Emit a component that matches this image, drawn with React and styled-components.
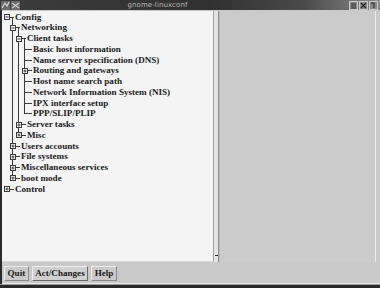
import React from 'react';
import styled, { createGlobalStyle } from 'styled-components';

const GlobalStyle = createGlobalStyle`
  html, body { margin: 0; padding: 0; background: #c9c9c9; }
  body { width: 380px; height: 288px; overflow: hidden; }
`;

const LINE = '#3a3a3a';

const Frame = styled.div`
  width: 380px;
  height: 288px;
  display: flex;
  flex-direction: column;
  background: #c9c9c9;
  box-sizing: border-box;
  border-left: 2px solid #2a2a2a;
  font-family: "Liberation Serif", "DejaVu Serif", serif;
`;

const TitleBar = styled.div`
  height: 10px;
  flex: none;
  display: flex;
  align-items: center;
  background: linear-gradient(to right, #3c3c3c 0%, #303030 55%, #4a4a4a 80%, #8a8a8a 100%);
  margin-left: -2px;
`;

const TitleIcons = styled.div`
  display: flex;
  gap: 1px;
  padding-left: 1px;
`;

const TitleText = styled.div`
  flex: 1;
  text-align: center;
  font-family: "DejaVu Sans", sans-serif;
  font-size: 7px;
  line-height: 10px;
  color: #b4b4b4;
  padding-right: 54px;
  letter-spacing: 0.1px;
`;

const TitleButtons = styled.div`
  display: flex;
  gap: 1px;
  padding-right: 2px;
`;

const Main = styled.div`
  flex: 1;
  display: flex;
  padding: 1px 4px 0 0;
  min-height: 0;
`;

const TreePane = styled.div`
  width: 212px;
  flex: none;
  background: #f4f4f4;
  border-right: 1px solid #a0a0a0;
  border-bottom: 1px solid #d8d8d8;
  padding-top: 0.5px;
  box-sizing: border-box;
  overflow: hidden;
`;

const Gutter = styled.div`
  width: 4px;
  flex: none;
  display: flex;
  flex-direction: column;
  justify-content: flex-end;
  align-items: center;
  padding-bottom: 6px;
  background: #e4e4e4;
`;

const GutterMark = styled.div`
  width: 3px;
  height: 1px;
  background: #222;
`;

const RightPane = styled.div`
  flex: 1;
  background: #cbcbcb;
  border-left: 1px solid #8e8e8e;
  box-shadow: inset 1px 0 0 #bdbdbd;
  border-right: 1px solid #ececec;
`;

const Row = styled.div`
  height: 10.75px;
  display: flex;
  align-items: stretch;
  padding-left: 1px;
`;

const Cell = styled.span`
  position: relative;
  width: 6px;
  flex: none;
  &::before {
    content: '';
    display: ${p => (p.$up || p.$down ? 'block' : 'none')};
    position: absolute;
    left: 3px;
    width: 1px;
    top: ${p => (p.$up ? '0' : '5px')};
    bottom: ${p => (p.$down ? '0' : 'calc(100% - 6px)')};
    background: ${LINE};
  }
  &::after {
    content: '';
    display: ${p => (p.$right ? 'block' : 'none')};
    position: absolute;
    left: 3px;
    right: 0;
    top: 5px;
    height: 1px;
    background: ${LINE};
  }
`;

const BoxIcon = styled.svg`
  position: absolute;
  left: 0.5px;
  top: 2.5px;
  z-index: 1;
`;

const Stem = styled.span`
  position: relative;
  width: 6px;
  flex: none;
  &::after {
    content: '';
    position: absolute;
    left: 0;
    width: 5px;
    top: 5px;
    height: 1px;
    background: ${LINE};
  }
  &::before {
    content: '';
    display: ${p => (p.$open ? 'block' : 'none')};
    position: absolute;
    left: 3px;
    width: 1px;
    top: 5px;
    bottom: 0;
    background: ${LINE};
  }
`;

const Label = styled.span`
  font-size: 9.1px;
  font-weight: bold;
  line-height: 10.75px;
  color: #1a1a1a;
  white-space: nowrap;
`;

const ButtonBar = styled.div`
  height: 22px;
  flex: none;
  display: flex;
  align-items: center;
  gap: 3px;
  padding: 1px 2px 0;
  border-bottom: 1px solid #e8e8e8;
  box-sizing: border-box;
`;

const Button = styled.button`
  height: 15px;
  padding: 0 ${p => p.$pad}px;
  margin: 0;
  font-family: "Liberation Serif", "DejaVu Serif", serif;
  font-size: 9.1px;
  font-weight: bold;
  color: #1a1a1a;
  background: ${p => (p.$active ? '#d0d0d0' : '#cacaca')};
  border: 1px solid;
  border-color: ${p => (p.$active ? '#f0f0f0 #6a6a6a #6a6a6a #f0f0f0' : '#ececec #8a8a8a #8a8a8a #ececec')};
  line-height: 13px;
  cursor: pointer;
`;

const BottomEdge = styled.div`
  height: 4px;
  flex: none;
  margin-left: -2px;
  background: linear-gradient(to bottom, #9a9a9a 0, #9a9a9a 1px, #2a2a2a 1px);
`;

const tree = [
  {
    label: 'Config',
    open: true,
    children: [
      {
        label: 'Networking',
        open: true,
        children: [
          {
            label: 'Client tasks',
            open: true,
            children: [
              { label: 'Basic host information' },
              { label: 'Name server specification (DNS)' },
              { label: 'Routing and gateways', children: [{ label: 'x' }] },
              { label: 'Host name search path' },
              { label: 'Network Information System (NIS)' },
              { label: 'IPX interface setup' },
              { label: 'PPP/SLIP/PLIP' },
            ],
          },
          { label: 'Server tasks', children: [{ label: 'x' }] },
          { label: 'Misc', children: [{ label: 'x' }] },
        ],
      },
      { label: 'Users accounts', children: [{ label: 'x' }] },
      { label: 'File systems', children: [{ label: 'x' }] },
      { label: 'Miscellaneous services', children: [{ label: 'x' }] },
      { label: 'boot mode', children: [{ label: 'x' }] },
    ],
  },
  { label: 'Control', children: [{ label: 'x' }] },
];

function flatten(nodes, depth = 0, guides = [], out = []) {
  nodes.forEach((n, i) => {
    const last = i === nodes.length - 1;
    out.push({ ...n, depth, guides, last });
    if (n.open && n.children) {
      flatten(n.children, depth + 1, [...guides, depth > 0 && !last], out);
    }
  });
  return out;
}

function Box({ open }) {
  return (
    <BoxIcon width="6" height="6" viewBox="0 0 6 6">
      <rect x="0.5" y="0.5" width="5" height="5" fill="#f4f4f4" stroke={LINE} strokeWidth="1" />
      <line x1="1.5" y1="3" x2="4.5" y2="3" stroke={LINE} strokeWidth="1" />
      {!open && <line x1="3" y1="1.5" x2="3" y2="4.5" stroke={LINE} strokeWidth="1" />}
    </BoxIcon>
  );
}

function TreeRow({ node }) {
  const hasKids = !!node.children;
  return (
    <Row>
      {node.guides.map((g, k) => (
        <Cell key={k} $up={g} $down={g} />
      ))}
      <Cell $up={node.depth > 0} $down={node.depth > 0 && !node.last} $right={!hasKids}>
        {hasKids && <Box open={node.open} />}
      </Cell>
      <Stem $open={node.open} />
      <Label>{node.label}</Label>
    </Row>
  );
}

function TitleIcon({ kind }) {
  return (
    <svg width="9" height="9" viewBox="0 0 9 9">
      <rect x="0" y="0" width="9" height="9" fill="#6a6a6a" />
      {kind === 'a' ? (
        <path d="M1 7 L4 2 L6 5 L8 1" stroke="#d8d8d8" strokeWidth="1.2" fill="none" />
      ) : (
        <path d="M1 2 L8 7 M1 7 L8 2" stroke="#d0d0d0" strokeWidth="1.2" fill="none" />
      )}
    </svg>
  );
}

function WinButton({ kind }) {
  return (
    <svg width="9" height="9" viewBox="0 0 9 9">
      <rect x="0.5" y="0.5" width="8" height="8" fill="#8a8a8a" stroke="#c8c8c8" />
      {kind === 'menu' && <path d="M2 3 H7 M2 5 H7 M2 7 H7" stroke="#222" strokeWidth="0.9" />}
      {kind === 'max' && <path d="M2 2 L7 7 M2 7 L7 2" stroke="#222" strokeWidth="1.1" />}
      {kind === 'close' && <path d="M2 2 L5 2 L5 7" stroke="#222" strokeWidth="1" fill="none" />}
    </svg>
  );
}

export default function App() {
  const rows = flatten(tree);
  return (
    <>
      <GlobalStyle />
      <Frame>
        <TitleBar>
          <TitleIcons>
            <TitleIcon kind="a" />
            <TitleIcon kind="b" />
          </TitleIcons>
          <TitleText>gnome-linuxconf</TitleText>
          <TitleButtons>
            <WinButton kind="menu" />
            <WinButton kind="max" />
            <WinButton kind="close" />
          </TitleButtons>
        </TitleBar>
        <Main>
          <TreePane>
            {rows.map((r, i) => (
              <TreeRow key={i} node={r} />
            ))}
          </TreePane>
          <Gutter>
            <GutterMark />
          </Gutter>
          <RightPane />
        </Main>
        <ButtonBar>
          <Button $pad={2.5}>Quit</Button>
          <Button $pad={2.5} $active>Act/Changes</Button>
          <Button $pad={2.5}>Help</Button>
        </ButtonBar>
        <BottomEdge />
      </Frame>
    </>
  );
}
